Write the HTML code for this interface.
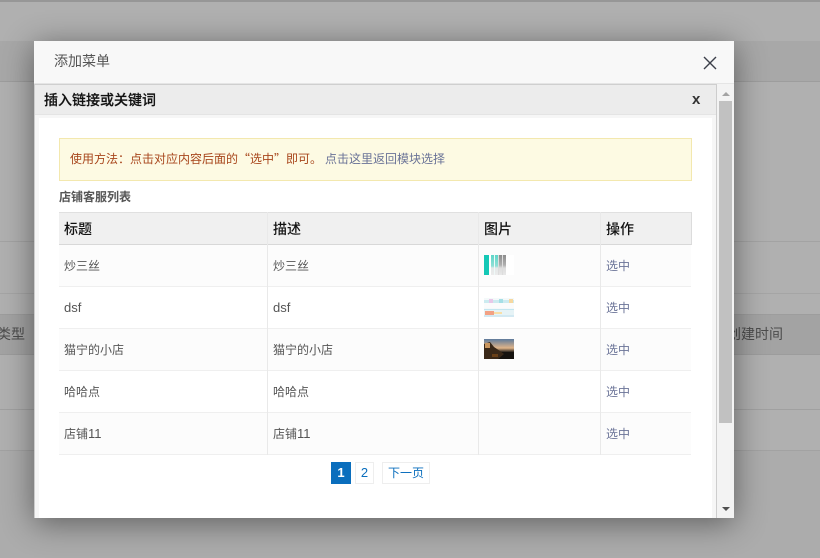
<!DOCTYPE html>
<html>
<head>
<meta charset="utf-8">
<style>
html,body{margin:0;padding:0;width:820px;height:558px;overflow:hidden;background:#b3b3b3;font-family:"Liberation Sans","Noto Sans CJK SC",sans-serif;}
.abs{position:absolute;}
.t{position:absolute;white-space:nowrap;line-height:16px;}
.cell{font-size:12px;color:#555;}
.cell span{font-size:13px;}
.sel{font-size:12px;color:#6a7397;}
.th{font-size:14px;color:#111;font-weight:500;}
</style>
</head>
<body>
<!-- background page -->
<div class="abs" style="left:0;top:0;width:820px;height:558px;background:#b0b0b0;overflow:hidden">
  <div class="abs" style="left:0;top:0;width:820px;height:2px;background:#979797"></div>
  <div class="abs" style="left:0;top:41px;width:820px;height:40px;background:#a8a8a8;border-bottom:1px solid #9d9d9d"></div>
  <div class="abs" style="left:0;top:241px;width:820px;height:1px;background:#a3a3a3"></div>
  <div class="abs" style="left:0;top:293px;width:820px;height:1px;background:#a5a5a5"></div>
  <div class="abs" style="left:0;top:314px;width:820px;height:39px;background:#a3a3a3;border-top:1px solid #9d9d9d;border-bottom:1px solid #9c9c9c"></div>
  <div class="abs" style="left:0;top:409px;width:820px;height:1px;background:#a0a0a0"></div>
  <div class="abs" style="left:0;top:450px;width:820px;height:108px;background:#acacac;border-top:1px solid #a2a2a2"></div>
  <div class="t" style="left:-3px;top:326px;font-size:14px;color:#4c4c4c">类型</div>
  <div class="t" style="left:727px;top:326px;font-size:14px;color:#4c4c4c">创建时间</div>
</div>
<!-- modal -->
<div class="abs" style="left:34px;top:41px;width:700px;height:477px;background:#f5f5f5;box-shadow:0 5px 30px rgba(0,0,0,.46);overflow:hidden">
  <div class="abs" style="left:0;top:0;width:700px;height:42px;background:#f8f8f8;border-bottom:1px solid #e5e5e5"></div>
  <div class="t" style="left:20px;top:12px;font-size:14px;color:#555">添加菜单</div>
  <svg class="abs" style="left:669px;top:15px" width="14" height="14" viewBox="0 0 14 14"><path d="M1 1L13 13M13 1L1 13" stroke="#3c3f4a" stroke-width="1.4" fill="none"/></svg>
  <!-- iframe area -->
  <div class="abs" style="left:0;top:43px;width:683px;height:434px;background:#f6f6f6;border-left:1px solid #cdcdcd;border-right:1px solid #cdcdcd;border-top:1px solid #cfcfcf;box-sizing:border-box">
    <div class="abs" style="left:0;top:0;width:681px;height:29px;background:#ececec;border-bottom:1px solid #e4e4e4"></div>
    <div class="t" style="left:9px;top:7px;font-size:14px;font-weight:500;color:#111;-webkit-text-stroke:.2px #111">插入链接或关键词</div>
    <div class="t" style="left:657px;top:7px;font-size:15px;font-weight:bold;color:#333">x</div>
    <div class="abs" style="left:4px;top:33px;width:673px;height:400px;background:#fff"></div>
  </div>
  <!-- scrollbar -->
  <div class="abs" style="left:683px;top:43px;width:17px;height:434px;background:#f3f3f3">
    <div class="abs" style="left:5px;top:8px;width:0;height:0;border-left:4px solid transparent;border-right:4px solid transparent;border-bottom:4px solid #a3a3a3"></div>
    <div class="abs" style="left:2px;top:17px;width:13px;height:322px;background:#c1c1c1"></div>
    <div class="abs" style="left:5px;top:423px;width:0;height:0;border-left:4px solid transparent;border-right:4px solid transparent;border-top:4px solid #505050"></div>
  </div>
</div>
<!-- alert -->
<div class="abs" style="left:59px;top:138px;width:633px;height:43px;box-sizing:border-box;background:#fdfae3;border:1px solid #f3e8ae"></div>
<div class="t" style="left:70px;top:151px;font-size:12px;color:#a8461c;font-family:'Noto Sans CJK SC',sans-serif">使用方法：点击对应内容后面的“选中”即可。</div>
<div class="t" style="left:325px;top:151px;font-size:12px;color:#6a7397;font-family:'Noto Sans CJK SC',sans-serif">点击这里返回模块选择</div>
<div class="t" style="left:59px;top:189px;font-size:12px;font-weight:bold;color:#555">店铺客服列表</div>
<!-- table -->
<div class="abs" style="left:59px;top:245px;width:632px;height:42px;box-sizing:border-box;background:#fcfcfc;border-bottom:1px solid #efefef"></div>
<div class="abs" style="left:59px;top:287px;width:632px;height:42px;box-sizing:border-box;background:#fff;border-bottom:1px solid #efefef"></div>
<div class="abs" style="left:59px;top:329px;width:632px;height:42px;box-sizing:border-box;background:#fcfcfc;border-bottom:1px solid #efefef"></div>
<div class="abs" style="left:59px;top:371px;width:632px;height:42px;box-sizing:border-box;background:#fff;border-bottom:1px solid #efefef"></div>
<div class="abs" style="left:59px;top:413px;width:632px;height:42px;box-sizing:border-box;background:#fcfcfc;border-bottom:1px solid #efefef"></div>
<div class="abs" style="left:59px;top:212px;width:633px;height:33px;box-sizing:border-box;background:#f0f0f0;border-top:1px solid #e0e0e0;border-bottom:1px solid #d8d8d8;border-right:1px solid #dcdcdc"></div>
<div class="abs" style="left:267px;top:212px;width:1px;height:243px;background:#e9e9e9"></div>
<div class="abs" style="left:478px;top:212px;width:1px;height:243px;background:#e9e9e9"></div>
<div class="abs" style="left:600px;top:212px;width:1px;height:243px;background:#e9e9e9"></div>
<div class="t th" style="left:64px;top:221px">标题</div>
<div class="t th" style="left:273px;top:221px">描述</div>
<div class="t th" style="left:484px;top:221px">图片</div>
<div class="t th" style="left:606px;top:221px">操作</div>

<div class="t cell" style="left:64px;top:258px">炒三丝</div>
<div class="t cell" style="left:273px;top:258px">炒三丝</div>
<div class="t sel" style="left:606px;top:258px">选中</div>
<div class="t cell" style="left:64px;top:300px"><span>dsf</span></div>
<div class="t cell" style="left:273px;top:300px"><span>dsf</span></div>
<div class="t sel" style="left:606px;top:300px">选中</div>
<div class="t cell" style="left:64px;top:342px">猫宁的小店</div>
<div class="t cell" style="left:273px;top:342px">猫宁的小店</div>
<div class="t sel" style="left:606px;top:342px">选中</div>
<div class="t cell" style="left:64px;top:384px">哈哈点</div>
<div class="t cell" style="left:273px;top:384px">哈哈点</div>
<div class="t sel" style="left:606px;top:384px">选中</div>
<div class="t cell" style="left:64px;top:426px">店铺<span>11</span></div>
<div class="t cell" style="left:273px;top:426px">店铺<span>11</span></div>
<div class="t sel" style="left:606px;top:426px">选中</div>

<!-- thumbnails -->
<svg class="abs" style="left:484px;top:255px" width="30" height="20" viewBox="0 0 30 20">
  <defs>
    <linearGradient id="a" x1="0" y1="0" x2="0" y2="1"><stop offset="0" stop-color="#8c8c8c"/><stop offset=".5" stop-color="#b0b0b0"/><stop offset=".65" stop-color="#ddd"/><stop offset="1" stop-color="#e8e8e8"/></linearGradient>
    <linearGradient id="b" x1="0" y1="0" x2="0" y2="1"><stop offset="0" stop-color="#5ed6c8"/><stop offset=".55" stop-color="#8fdfd6"/><stop offset=".65" stop-color="#e4e8e8"/><stop offset="1" stop-color="#ececec"/></linearGradient>
  </defs>
  <rect width="30" height="20" fill="#fff"/>
  <rect x="0" y="0" width="5" height="20" fill="#14c8b6"/>
  <rect x="7" width="3" height="20" fill="url(#b)"/>
  <rect x="10" width="1" height="20" fill="#e8f6f5" opacity=".7"/>
  <rect x="11" width="3" height="20" fill="url(#b)"/>
  <rect x="14" width="1" height="20" fill="#ddd"/>
  <rect x="15" width="3" height="20" fill="url(#a)"/>
  <rect x="18" width="1" height="20" fill="#ddd"/>
  <rect x="19" width="3" height="20" fill="url(#a)"/>
</svg>
<svg class="abs" style="left:484px;top:298px" width="30" height="19" viewBox="0 0 30 19">
  <rect width="30" height="19" fill="#f4f9fa"/>
  <rect x="0" y="2" width="30" height="3" fill="#cdebf0"/>
  <rect x="5" y="1" width="4" height="4" fill="#e8c8e8"/>
  <rect x="15" y="1" width="4" height="4" fill="#a5dfe6"/>
  <rect x="25" y="1" width="4" height="4" fill="#f6d8a0"/>
  <rect x="0" y="5" width="30" height="5" fill="#fbfbfb"/>
  <rect x="0" y="11" width="30" height="1" fill="#c4e6f0"/>
  <rect x="0" y="12" width="30" height="5" fill="#e6f3f6"/>
  <rect x="1" y="13" width="9" height="4" fill="#f2a184"/>
  <rect x="10" y="14" width="8" height="2" fill="#f8dfa8"/>
  <rect x="0" y="17" width="30" height="2" fill="#d3e9f2"/>
</svg>
<svg class="abs" style="left:484px;top:339px" width="30" height="20" viewBox="0 0 30 20">
  <defs><linearGradient id="s" x1="0" y1="0" x2="0" y2="1"><stop offset="0" stop-color="#5d7a9c"/><stop offset=".45" stop-color="#e0b488"/><stop offset=".65" stop-color="#2a241e"/></linearGradient></defs>
  <rect width="30" height="20" fill="url(#s)"/>
  <rect x="0" y="13" width="30" height="7" fill="#15120f"/>
  <path d="M0 5L6 3L10 8L16 12L20 15L14 20L0 20Z" fill="#3a2818"/>
  <rect x="1" y="4" width="5" height="5" fill="#c8955e"/>
  <rect x="8" y="15" width="6" height="3" fill="#6a4018"/>
</svg>

<!-- pagination -->
<div class="abs" style="left:331px;top:462px;width:20px;height:22px;background:#0a6ebd;color:#fff;font-size:13px;font-weight:bold;text-align:center;line-height:22px">1</div>
<div class="abs" style="left:355px;top:462px;width:19px;height:22px;box-sizing:border-box;border:1px solid #eee;color:#0a6ebd;font-size:13px;text-align:center;line-height:20px">2</div>
<div class="abs" style="left:382px;top:462px;width:48px;height:22px;box-sizing:border-box;border:1px solid #eee;color:#0a6ebd;font-size:12px;text-align:center;line-height:20px">下一页</div>
</body>
</html>
